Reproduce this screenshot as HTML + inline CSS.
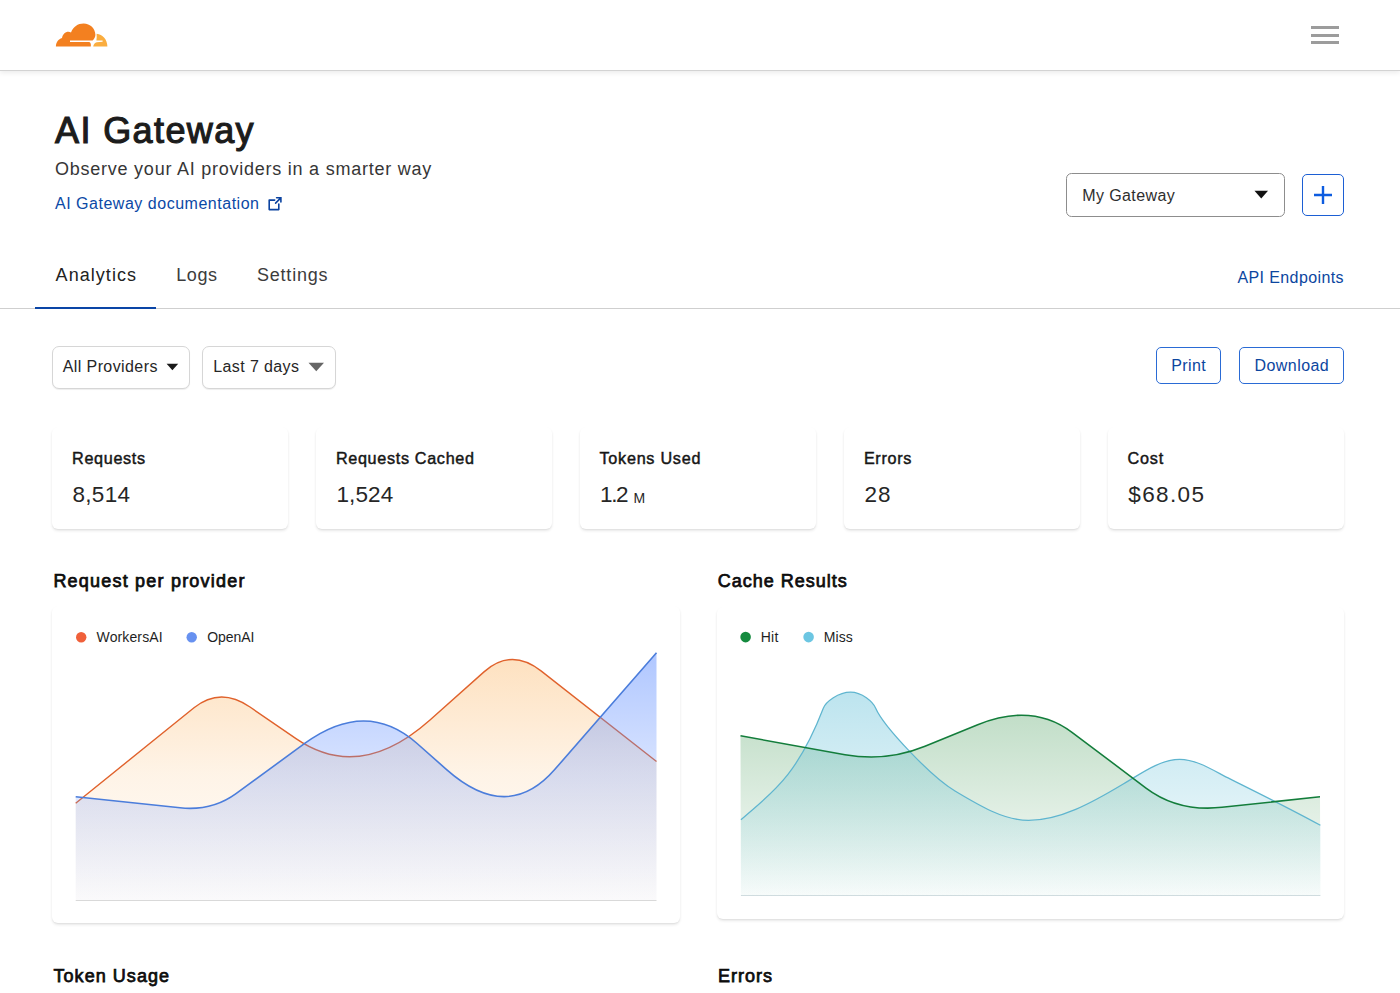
<!DOCTYPE html>
<html><head><meta charset="utf-8"><title>AI Gateway</title>
<style>
html,body{margin:0;padding:0;background:#fff;}
body{width:1400px;height:993px;position:relative;overflow:hidden;font-family:"Liberation Sans",sans-serif;-webkit-font-smoothing:antialiased;}
.t{position:absolute;white-space:nowrap;line-height:1;}
.abs{position:absolute;box-sizing:border-box;}
.hdr{left:0;top:0;width:1400px;height:71px;background:#fff;border-bottom:1px solid #d3d3d3;box-shadow:0 2px 5px rgba(0,0,0,0.08);}
.bar{position:absolute;left:1311px;width:28px;height:3px;background:#9c9c9c;}
.card{position:absolute;background:#fff;border-radius:6px;box-shadow:0 2px 3px rgba(0,0,0,0.085),0 1px 1.5px rgba(0,0,0,0.05);}
</style></head><body>
<div class="abs hdr"></div>
<svg class="abs" style="left:54px;top:21px" width="56" height="28" viewBox="0 0 56 28">
  <path fill="#f38020" d="M1.9,25.6 C2,21.4 4.4,18 8,17 C8.6,13.4 11.2,10.8 14.4,10.8 C15.4,10.8 16.2,11 17,11.4 C19,5.8 23.8,2.4 29.6,2.4 C36.2,2.4 41.4,7.6 41.4,13.8 C41.4,15.8 40.4,17.8 38.6,19.6 L16,19.6 L16,20.9 L35.2,20.9 C36.6,21.3 37.2,23 36.8,25.6 Z"/>
  <path fill="#faad3f" d="M42.6,12.7 C48.7,13.1 53.4,18.6 53.4,25.6 L39.2,25.6 C39.6,23.2 40.8,21.6 42.8,21.2 L48.6,20.8 L48.6,19.6 L42.4,19.6 C42.8,17.4 42.8,15 42.6,12.7 Z"/>
</svg>
<div class="bar" style="top:25.5px"></div>
<div class="bar" style="top:33.5px"></div>
<div class="bar" style="top:41px"></div>

<!-- external link icon -->
<svg class="abs" style="left:267px;top:195.5px" width="17" height="16" viewBox="0 0 17 16">
  <path d="M7.7,4.1 H2.2 V13.6 H11.8 V8.1" fill="none" stroke="#0b43a0" stroke-width="1.6" stroke-linejoin="round" stroke-linecap="round"/>
  <path d="M8.6,7.1 L13.8,1.9 M9.6,1.8 H13.9 V6" fill="none" stroke="#0b43a0" stroke-width="1.6" stroke-linecap="round"/>
</svg>

<!-- tabs line -->
<div class="abs" style="left:0;top:308px;width:1400px;height:1px;background:#cfcfcf"></div>
<div class="abs" style="left:35px;top:306.5px;width:121px;height:2.5px;background:#0a45a6"></div>

<!-- My Gateway select -->
<div class="abs" style="left:1066px;top:173px;width:218.5px;height:44px;border:1.5px solid #8d8d8d;border-radius:5.5px;background:#fff"></div>
<svg class="abs" style="left:1254px;top:190.4px" width="15" height="9"><path d="M0.5,0.8 H14 L7.25,8.4 Z" fill="#111"/></svg>
<!-- plus button -->
<div class="abs" style="left:1302px;top:174px;width:42px;height:42px;border:1.8px solid #1c5fd4;border-radius:5px;background:#fff"></div>
<svg class="abs" style="left:1313px;top:185px" width="20" height="20"><path d="M10,1 V19 M1,10 H19" stroke="#0d5ce0" stroke-width="2.4" fill="none"/></svg>

<!-- filters -->
<div class="abs" style="left:51.5px;top:345.5px;width:138px;height:43px;border:1.5px solid #d6d6d6;border-radius:7px;background:#fff;box-shadow:0 1px 1px rgba(0,0,0,0.07)"></div>
<svg class="abs" style="left:166px;top:363px" width="13" height="8"><path d="M0.6,0.8 H12.2 L6.4,7.2 Z" fill="#1a1a1a"/></svg>
<div class="abs" style="left:202px;top:345.5px;width:134px;height:43px;border:1.5px solid #d6d6d6;border-radius:7px;background:#fff;box-shadow:0 1px 1px rgba(0,0,0,0.07)"></div>
<svg class="abs" style="left:308px;top:362px" width="17" height="10"><path d="M0.5,0.8 H16 L8.25,9.2 Z" fill="#666"/></svg>

<!-- print / download -->
<div class="abs" style="left:1156px;top:347px;width:64.5px;height:37px;border:1.8px solid #2a6bd5;border-radius:5px;background:#fff"></div>
<div class="abs" style="left:1239px;top:347px;width:105px;height:37px;border:1.8px solid #2a6bd5;border-radius:5px;background:#fff"></div>

<!-- stat cards -->
<div class="card" style="left:52px;top:427px;width:236px;height:101.5px"></div>
<div class="card" style="left:316px;top:427px;width:236px;height:101.5px"></div>
<div class="card" style="left:580px;top:427px;width:236px;height:101.5px"></div>
<div class="card" style="left:844px;top:427px;width:236px;height:101.5px"></div>
<div class="card" style="left:1108px;top:427px;width:236px;height:101.5px"></div>

<!-- chart cards -->
<div class="card" style="left:52px;top:606px;width:628px;height:317px"></div>
<div class="card" style="left:717px;top:607px;width:627px;height:312px"></div>

<svg class="abs" style="left:0;top:0" width="1400" height="993" viewBox="0 0 1400 993">
<defs>
<linearGradient id="gO" gradientUnits="userSpaceOnUse" x1="0" y1="650" x2="0" y2="900">
 <stop offset="0" stop-color="rgb(250,160,55)" stop-opacity="0.33"/>
 <stop offset="0.5" stop-color="rgb(250,160,55)" stop-opacity="0.12"/>
 <stop offset="1" stop-color="rgb(250,160,55)" stop-opacity="0.02"/>
</linearGradient>
<linearGradient id="gB" gradientUnits="userSpaceOnUse" x1="0" y1="650" x2="0" y2="900">
 <stop offset="0" stop-color="rgb(100,145,255)" stop-opacity="0.52"/>
 <stop offset="0.4" stop-color="rgb(100,145,255)" stop-opacity="0.30"/>
 <stop offset="1" stop-color="rgb(100,145,255)" stop-opacity="0.03"/>
</linearGradient>
<linearGradient id="gG" gradientUnits="userSpaceOnUse" x1="0" y1="700" x2="0" y2="895">
 <stop offset="0" stop-color="rgb(60,150,80)" stop-opacity="0.34"/>
 <stop offset="1" stop-color="rgb(60,150,80)" stop-opacity="0.02"/>
</linearGradient>
<linearGradient id="gM" gradientUnits="userSpaceOnUse" x1="0" y1="690" x2="0" y2="895">
 <stop offset="0" stop-color="rgb(95,190,215)" stop-opacity="0.42"/>
 <stop offset="1" stop-color="rgb(95,190,215)" stop-opacity="0.03"/>
</linearGradient>
</defs>
<line x1="75.7" y1="900.5" x2="656.5" y2="900.5" stroke="#d9d9d9" stroke-width="1.2"/>
<path d="M75.70,803.20 L194.00,707.81 Q220.30,686.60 250.00,707.03 L296.00,738.68 Q359.70,782.50 430.00,719.94 L484.00,671.89 Q511.30,647.60 541.00,670.90 L656.50,761.50 L656.5,900 L75.7,900 Z" fill="url(#gO)"/>
<path d="M75.70,803.20 L194.00,707.81 Q220.30,686.60 250.00,707.03 L296.00,738.68 Q359.70,782.50 430.00,719.94 L484.00,671.89 Q511.30,647.60 541.00,670.90 L656.50,761.50" fill="none" stroke="#e0622c" stroke-width="1.4"/>
<path d="M75.70,796.75 L180.00,807.82 Q211.90,811.20 236.00,793.61 L304.70,743.46 Q366.30,698.50 417.10,743.48 L446.60,769.59 Q507.60,823.60 554.70,769.56 L656.50,652.75 L656.5,900 L75.7,900 Z" fill="url(#gB)"/>
<path d="M75.70,796.75 L180.00,807.82 Q211.90,811.20 236.00,793.61 L304.70,743.46 Q366.30,698.50 417.10,743.48 L446.60,769.59 Q507.60,823.60 554.70,769.56 L656.50,652.75" fill="none" stroke="#4b7ddb" stroke-width="1.6"/>

<line x1="740.9" y1="895.5" x2="1320.4" y2="895.5" stroke="#d3dde0" stroke-width="1.2"/>
<path d="M740.50,735.80 L845.00,754.64 Q886.40,762.10 925.00,746.31 L977.70,724.74 Q1032.30,702.40 1072.00,732.29 L1146.00,788.01 Q1178.00,812.10 1222.00,807.33 L1320.00,796.70 L1320.4,895.4 L740.9,895.4 Z" fill="url(#gG)"/>
<path d="M740.90,819.80 C768.30,795.14 795.90,779.54 823.30,708.30 C825.80,701.80 838.50,692.20 850.50,692.20 C862.00,692.20 872.90,701.86 875.70,708.30 C883.70,726.70 931.00,776.60 955.00,791.00 C979.50,805.70 1004.10,820.40 1028.60,820.40 C1060.00,820.40 1091.40,803.14 1122.80,784.30 C1141.80,772.90 1160.70,759.30 1179.70,759.30 C1196.50,759.30 1213.20,770.50 1230.00,778.90 C1260.10,793.95 1290.30,808.75 1320.40,825.30 L1320.4,895.4 L740.9,895.4 Z" fill="url(#gM)"/>
<path d="M740.90,819.80 C768.30,795.14 795.90,779.54 823.30,708.30 C825.80,701.80 838.50,692.20 850.50,692.20 C862.00,692.20 872.90,701.86 875.70,708.30 C883.70,726.70 931.00,776.60 955.00,791.00 C979.50,805.70 1004.10,820.40 1028.60,820.40 C1060.00,820.40 1091.40,803.14 1122.80,784.30 C1141.80,772.90 1160.70,759.30 1179.70,759.30 C1196.50,759.30 1213.20,770.50 1230.00,778.90 C1260.10,793.95 1290.30,808.75 1320.40,825.30" fill="none" stroke="#5fb5cf" stroke-width="1.25"/>
<path d="M740.50,735.80 L845.00,754.64 Q886.40,762.10 925.00,746.31 L977.70,724.74 Q1032.30,702.40 1072.00,732.29 L1146.00,788.01 Q1178.00,812.10 1222.00,807.33 L1320.00,796.70" fill="none" stroke="#137d3b" stroke-width="1.55"/>

<circle cx="81.2" cy="637.2" r="5.2" fill="#f0603a"/>
<circle cx="191.7" cy="637.2" r="5.2" fill="#6791f0"/>
<circle cx="745.6" cy="637.1" r="5.3" fill="#148a3e"/>
<circle cx="808.6" cy="637.1" r="5.3" fill="#6cc6e2"/>
</svg>
<div class="t" style="left:55.00px;top:113.03px;font-size:36px;letter-spacing:1.391px;color:#1c1c1c;font-weight:400;-webkit-text-stroke:1.15px #1c1c1c;">AI Gateway</div>
<div class="t" style="left:55.00px;top:159.76px;font-size:18px;letter-spacing:0.759px;color:#363636;font-weight:400;">Observe your AI providers in a smarter way</div>
<div class="t" style="left:55.00px;top:196.06px;font-size:16px;letter-spacing:0.517px;color:#0b49a6;font-weight:400;">AI Gateway documentation</div>
<div class="t" style="left:55.60px;top:265.76px;font-size:18px;letter-spacing:1.048px;color:#222;font-weight:400;">Analytics</div>
<div class="t" style="left:176.25px;top:265.76px;font-size:18px;letter-spacing:0.575px;color:#3c3c3c;font-weight:400;">Logs</div>
<div class="t" style="left:257.00px;top:265.76px;font-size:18px;letter-spacing:0.781px;color:#3c3c3c;font-weight:400;">Settings</div>
<div class="t" style="left:1082.25px;top:187.96px;font-size:16px;letter-spacing:0.399px;color:#2e2e2e;font-weight:400;">My Gateway</div>
<div class="t" style="left:1237.50px;top:270.06px;font-size:16px;letter-spacing:0.384px;color:#0c469f;font-weight:400;">API Endpoints</div>
<div class="t" style="left:62.70px;top:358.56px;font-size:16px;letter-spacing:0.408px;color:#262626;font-weight:400;">All Providers</div>
<div class="t" style="left:213.30px;top:358.56px;font-size:16px;letter-spacing:0.388px;color:#262626;font-weight:400;">Last 7 days</div>
<div class="t" style="left:1171.25px;top:358.26px;font-size:16px;letter-spacing:0.401px;color:#0c469f;font-weight:400;">Print</div>
<div class="t" style="left:1254.50px;top:358.26px;font-size:16px;letter-spacing:0.443px;color:#0c469f;font-weight:400;">Download</div>
<div class="t" style="left:72.10px;top:449.59px;font-size:16.2px;letter-spacing:0.651px;color:#161616;font-weight:400;-webkit-text-stroke:0.45px #161616;">Requests</div>
<div class="t" style="left:72.50px;top:483.75px;font-size:22.5px;letter-spacing:0.301px;color:#262626;font-weight:400;">8,514</div>
<div class="t" style="left:335.90px;top:449.59px;font-size:16.2px;letter-spacing:0.673px;color:#161616;font-weight:400;-webkit-text-stroke:0.45px #161616;">Requests Cached</div>
<div class="t" style="left:336.40px;top:483.75px;font-size:22.5px;letter-spacing:0.151px;color:#262626;font-weight:400;">1,524</div>
<div class="t" style="left:599.50px;top:449.59px;font-size:16.2px;letter-spacing:0.735px;color:#161616;font-weight:400;-webkit-text-stroke:0.45px #161616;">Tokens Used</div>
<div class="t" style="left:600.00px;top:483.75px;font-size:22.5px;letter-spacing:-1.387px;color:#262626;font-weight:400;">1.2</div>
<div class="t" style="left:863.90px;top:449.59px;font-size:16.2px;letter-spacing:0.681px;color:#161616;font-weight:400;-webkit-text-stroke:0.45px #161616;">Errors</div>
<div class="t" style="left:864.50px;top:483.75px;font-size:22.5px;letter-spacing:0.980px;color:#262626;font-weight:400;">28</div>
<div class="t" style="left:1127.50px;top:449.59px;font-size:16.2px;letter-spacing:0.831px;color:#161616;font-weight:400;-webkit-text-stroke:0.45px #161616;">Cost</div>
<div class="t" style="left:1128.30px;top:483.75px;font-size:22.5px;letter-spacing:1.375px;color:#262626;font-weight:400;">$68.05</div>
<div class="t" style="left:633.50px;top:491.15px;font-size:14px;letter-spacing:0.000px;color:#262626;font-weight:400;">M</div>
<div class="t" style="left:53.40px;top:571.86px;font-size:18px;letter-spacing:1.206px;color:#0d0d0d;font-weight:400;-webkit-text-stroke:0.75px #0d0d0d;">Request per provider</div>
<div class="t" style="left:717.70px;top:571.76px;font-size:18px;letter-spacing:0.995px;color:#0d0d0d;font-weight:400;-webkit-text-stroke:0.75px #0d0d0d;">Cache Results</div>
<div class="t" style="left:53.50px;top:967.01px;font-size:18px;letter-spacing:1.043px;color:#0d0d0d;font-weight:400;-webkit-text-stroke:0.75px #0d0d0d;">Token Usage</div>
<div class="t" style="left:718.00px;top:967.01px;font-size:18px;letter-spacing:1.001px;color:#0d0d0d;font-weight:400;-webkit-text-stroke:0.75px #0d0d0d;">Errors</div>
<div class="t" style="left:96.60px;top:629.65px;font-size:14px;letter-spacing:0.114px;color:#1f1f1f;font-weight:400;">WorkersAI</div>
<div class="t" style="left:207.20px;top:629.65px;font-size:14px;letter-spacing:-0.075px;color:#1f1f1f;font-weight:400;">OpenAI</div>
<div class="t" style="left:760.75px;top:629.90px;font-size:14px;letter-spacing:0.221px;color:#1f1f1f;font-weight:400;">Hit</div>
<div class="t" style="left:823.75px;top:629.90px;font-size:14px;letter-spacing:0.060px;color:#1f1f1f;font-weight:400;">Miss</div>
</body></html>
